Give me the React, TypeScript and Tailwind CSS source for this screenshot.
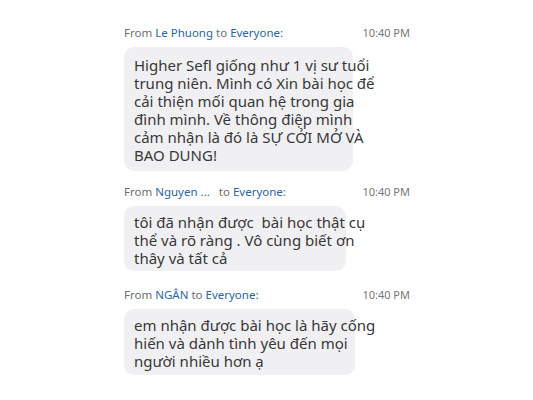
const messages = [
  {
    from: 'Le Phuong',
    time: '10:40 PM',
    lines: [
      'Higher Sefl giống như 1 vị sư tuổi',
      'trung niên. Mình có Xin bài học để',
      'cải thiện mối quan hệ trong gia',
      'đình mình. Về thông điệp mình',
      'cảm nhận là đó là SỰ CỞI MỞ VÀ',
      'BAO DUNG!',
    ],
    box: 'w-[229px] pt-[9px] pb-[7px]',
    gap: '',
  },
  {
    from: 'Nguyen ...',
    time: '10:40 PM',
    lines: ['tôi đã nhận được  bài học thật cụ', 'thể và rõ ràng . Vô cùng biết ơn', 'thây và tất cả'],
    box: 'w-[222px] pt-[7px] pb-[4px]',
    gap: 'mt-[11px]',
  },
  {
    from: 'NGÂN',
    time: '10:40 PM',
    lines: ['em nhận được bài học là hãy cống', 'hiến và dành tình yêu đến mọi', 'người nhiều hơn ạ'],
    box: 'w-[231px] pt-[7px] pb-[5px]',
    gap: 'mt-[14px]',
  },
];

const App = () => {
  return (
    <div className="h-[400px] w-[533px] bg-white font-['Noto_Sans',sans-serif]">
      <div className="flex flex-col pl-[124px] pt-[23px]">
        {messages.map((msg, idx) => (
          <div key={idx} className={`flex flex-col ${msg.gap}`}>
            <div className="flex h-5 w-[286px] items-center justify-between text-[11.5px] text-[#6e6e6e]">
              <span className="whitespace-pre">
                From <span className="text-[#2a65a0]">{msg.from}</span>
                {msg.from.endsWith('...') ? '   ' : ' '}to{' '}
                <span className="text-[#2a65a0]">Everyone:</span>
              </span>
              <span className="text-[11px] text-[#777]">{msg.time}</span>
            </div>
            <div
              className={`mt-1 ${msg.box} rounded-[10px] bg-[#f0f0f3] pl-[10px] pr-2 text-[15px] leading-[18px] whitespace-pre text-[#383838]`}
            >
              {msg.lines.join('\n')}
            </div>
          </div>
        ))}
      </div>
    </div>
  );
};

export default App;
